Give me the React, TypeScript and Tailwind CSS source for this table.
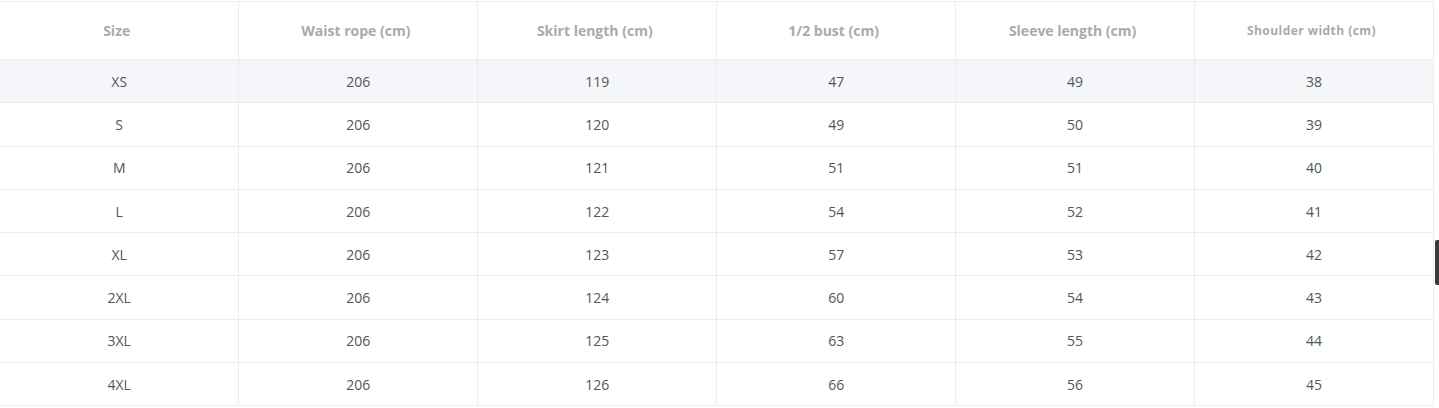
const headers = ['Size', 'Waist rope (cm)', 'Skirt length (cm)', '1/2 bust (cm)', 'Sleeve length (cm)', 'Shoulder width (cm)'];

const rows = [
    ['XS', '206', '119', '47', '49', '38'],
    ['S', '206', '120', '49', '50', '39'],
    ['M', '206', '121', '51', '51', '40'],
    ['L', '206', '122', '54', '52', '41'],
    ['XL', '206', '123', '57', '53', '42'],
    ['2XL', '206', '124', '60', '54', '43'],
    ['3XL', '206', '125', '63', '55', '44'],
    ['4XL', '206', '126', '66', '56', '45'],
];

export default function App() {
    return (
        <div className="relative w-[1439px] h-[408px] overflow-hidden bg-white pt-px" style={{ fontFamily: '"Open Sans", "Noto Sans", sans-serif' }}>
            <table className="w-[1434px] table-fixed border-collapse">
                <thead>
                    <tr className="h-[58px] border-t border-[#eaecf0]">
                        {headers.map((h, i) => (
                            <th key={h} className={`${i > 0 ? 'border-l' : ''} border-r border-b border-[#eaecf0] pr-[5px] text-center font-bold text-[#a7aab1] ${i === 5 ? 'text-[12px] tracking-[0.45px]' : 'text-[14px]'}`}>
                                {h}
                            </th>
                        ))}
                    </tr>
                </thead>
                <tbody>
                    {rows.map((r, ri) => (
                        <tr key={r[0]} className={`h-[43.3px] ${ri === 0 ? 'bg-[#f5f6fa]' : 'bg-white'}`}>
                            {r.map((c, ci) => (
                                <td key={ci} className={`${ci > 0 ? 'border-l' : ''} border-r border-b border-[#eaecf0] text-center text-[14px] text-[#555555]`}>
                                    {c}
                                </td>
                            ))}
                        </tr>
                    ))}
                </tbody>
            </table>

            {/* side tab */}
            <div className="absolute right-0 top-[240px] w-[4px] h-[45px] rounded-l-[2px] bg-[#3b3b3b]" />
        </div>
    );
}
